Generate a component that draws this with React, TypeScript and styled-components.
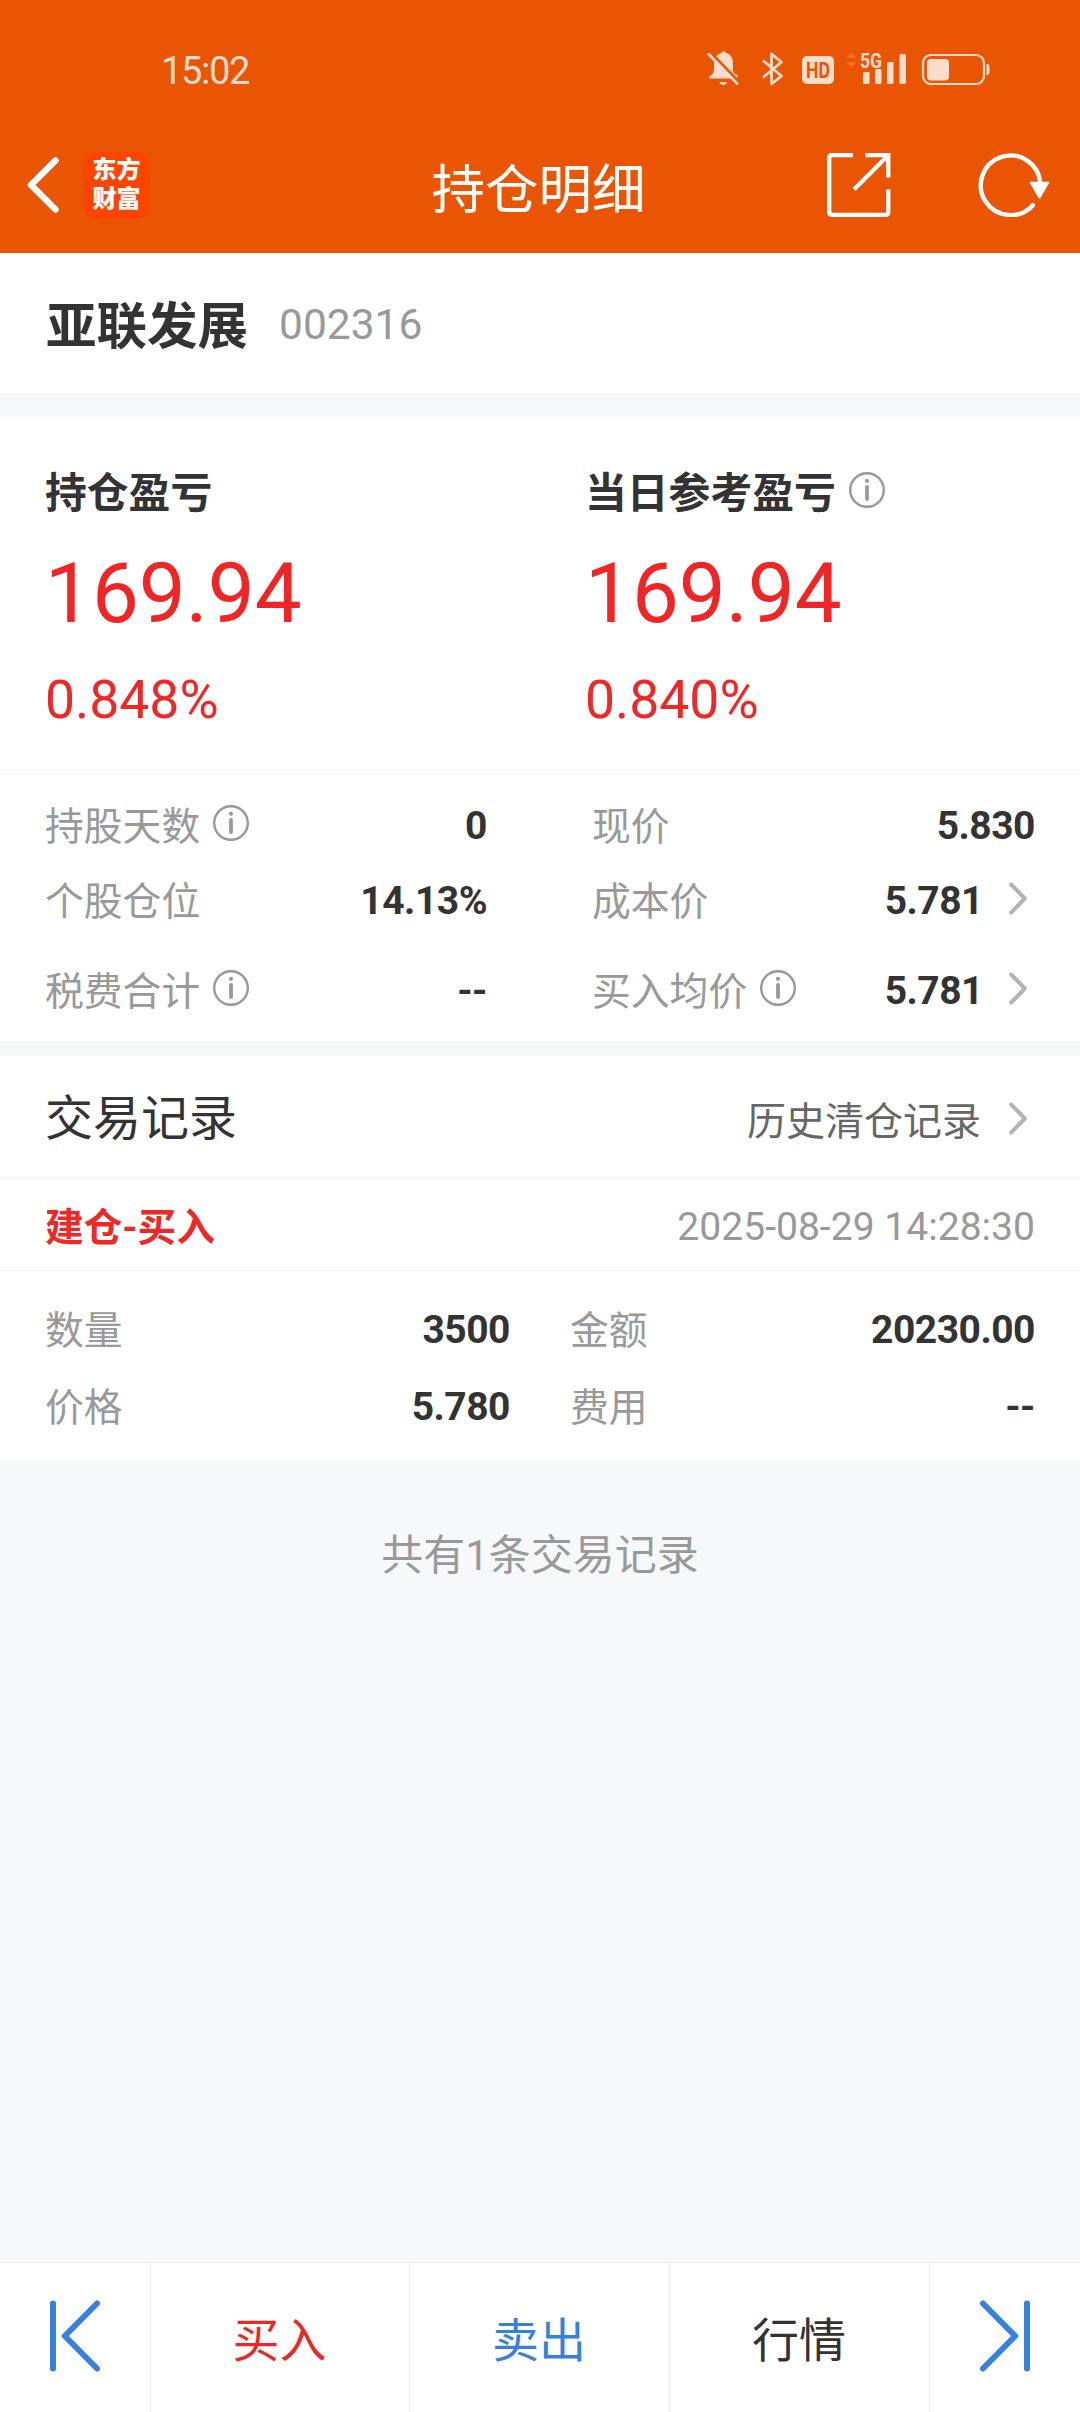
import React from 'react';
import styled, { createGlobalStyle } from 'styled-components';

const GlobalStyle = createGlobalStyle`
  * { box-sizing: border-box; }
  body {
    margin: 0;
    background: #f6f8fa;
    font-family: Roboto, 'Noto Sans CJK SC', sans-serif;
    color: #333;
  }
  svg { display: block; flex: none; }
`;

const Screen = styled.div`
  width: 1080px;
  height: 2412px;
  display: flex;
  flex-direction: column;
  background: #f6f8fa;
  overflow: hidden;
  white-space: nowrap;
`;

const Header = styled.header`
  height: 253px;
  flex: none;
  background: #ea5504;
  color: #fff;
`;

const StatusBar = styled.div`
  height: 118px;
  padding: 20px 90px 0 161px;
  display: flex;
  align-items: center;
  justify-content: space-between;
  color: #fcdccb;
`;

const Clock = styled.span`
  font-size: 38px;
  line-height: 44px;
  letter-spacing: -1.3px;
  padding-top: 4px;
`;

const TitleBar = styled.div`
  height: 135px;
  padding: 0 29px 1px 26px;
  display: grid;
  grid-template-columns: 1fr auto 1fr;
  align-items: center;
`;

const BarSide = styled.div<{ $end?: boolean }>`
  display: flex;
  align-items: center;
  gap: ${(p) => (p.$end ? '87px' : '23px')};
  justify-content: ${(p) => (p.$end ? 'flex-end' : 'flex-start')};
`;

const PageTitle = styled.h1`
  margin: 0;
  padding: 11px 0 0;
  font-size: 53.5px;
  font-weight: 400;
  line-height: 64px;
`;

const AppLogo = styled.div`
  width: 67px;
  height: 67px;
  border-radius: 13px;
  background: #ff4400;
  display: flex;
  flex-direction: column;
  align-items: center;
  justify-content: center;
  font-size: 24px;
  font-weight: 900;
  line-height: 29px;
`;

const StockBar = styled.section`
  height: 140px;
  margin-bottom: 24px;
  flex: none;
  background: #fff;
  padding-left: 46px;
  display: flex;
  align-items: center;
  gap: 31px;
`;

const StockName = styled.h2`
  margin: 0;
  padding-top: 8px;
  font-size: 50.5px;
  font-weight: 700;
  line-height: 60px;
`;

const StockCode = styled.span`
  padding-top: 3px;
  font-size: 42.5px;
  line-height: 50px;
  color: #999;
`;

const ProfitPanel = styled.section`
  height: 354px;
  flex: none;
  background: #fff;
  border-bottom: 1px solid #f4f5f6;
  padding: 47px 45px 0;
  display: grid;
  grid-template-columns: 540px 1fr;
`;

const ProfitTitle = styled.h3`
  margin: 0 0 20px;
  height: 60px;
  display: flex;
  align-items: center;
  gap: 13px;
  font-size: 41.8px;
  font-weight: 700;
  line-height: 60px;
`;

const ProfitValue = styled.div`
  font-size: 83.5px;
  line-height: 100px;
  color: #f02525;
`;

const ProfitRate = styled.div`
  margin-top: 26px;
  font-size: 53.5px;
  line-height: 60px;
  color: #ee2727;
`;

const StatsPanel = styled.section`
  height: 270px;
  margin-bottom: 15px;
  flex: none;
  background: #fff;
  padding: 17px 45px 0;
  display: grid;
  grid-template-columns: 442px 443px;
  grid-template-rows: 75px 90px 75px;
  column-gap: 105px;
`;

const Field = styled.div<{ $height: number }>`
  height: ${(p) => p.$height}px;
  display: flex;
  align-items: center;
  justify-content: space-between;
`;

const FieldLabel = styled.span`
  display: flex;
  align-items: center;
  gap: 13px;
  font-size: 38.8px;
  line-height: 46px;
  color: #999;
`;

const LabelText = styled.span`
  padding-top: 3px;
`;

const FieldValue = styled.span`
  display: flex;
  align-items: center;
  gap: 26px;
  font-size: 39px;
  font-weight: 700;
  line-height: 46px;
  letter-spacing: -0.5px;
`;

const Info = styled.svg<{ $lift: number }>`
  width: 36px;
  height: 36px;
  margin-bottom: ${(p) => p.$lift}px;
`;

const Chevron = styled.svg<{ $top?: number; $bottom?: number }>`
  width: 18px;
  height: 33px;
  margin: ${(p) => p.$top ?? 0}px 8px ${(p) => p.$bottom ?? 0}px 0;
`;

const RecordsHead = styled.section`
  height: 124px;
  flex: none;
  background: #fff;
  border-bottom: 4px solid #f6f8fa;
  padding: 0 45px;
  display: flex;
  align-items: center;
  justify-content: space-between;
`;

const RecordsTitle = styled.h3`
  margin: 0;
  padding-top: 6px;
  font-size: 48px;
  font-weight: 400;
  line-height: 56px;
`;

const HistoryLink = styled.a`
  display: flex;
  align-items: center;
  gap: 28px;
  font-size: 39px;
  line-height: 46px;
  color: #666;
`;

const HistoryText = styled.span`
  padding-top: 11px;
`;

const RecordHead = styled.div`
  height: 91px;
  flex: none;
  background: #fff;
  border-bottom: 1px solid #f4f5f6;
  padding: 0 45px;
  display: flex;
  align-items: center;
  justify-content: space-between;
`;

const RecordKind = styled.span`
  padding-top: 5px;
  font-size: 38.7px;
  font-weight: 700;
  line-height: 46px;
  color: #ee2727;
`;

const RecordTime = styled.time`
  padding-top: 3px;
  font-size: 39.1px;
  line-height: 46px;
  color: #999;
`;

const RecordBody = styled.section`
  height: 190px;
  flex: none;
  background: #fff;
  padding: 20px 45px 0;
  display: grid;
  grid-template-columns: 465px 465px;
  grid-auto-rows: 77px;
  column-gap: 60px;
`;

const Summary = styled.p`
  flex: 1;
  margin: 65px 0 0;
  text-align: center;
  font-size: 42px;
  line-height: 60px;
  color: #999;
`;

const BottomNav = styled.nav`
  height: 150px;
  flex: none;
  background: #fff;
  border-top: 1px solid #e9eaeb;
  display: grid;
  grid-template-columns: 150px 259px 260px 260px 151px;
`;

const NavCell = styled.button<{ $color?: string; $icon?: boolean }>`
  border: 0;
  background: none;
  margin: 0;
  padding: ${(p) => (p.$icon ? '0 0 4px' : '6px 1px 0 0')};
  display: flex;
  align-items: center;
  justify-content: center;
  font: 400 47px/56px Roboto, 'Noto Sans CJK SC', sans-serif;
  color: ${(p) => p.$color ?? '#333'};
  & + & { border-left: 1px solid #e9eaeb; }
`;

const InfoIcon = ({ lift = 5 }: { lift?: number }) => (
  <Info viewBox="0 0 36 36" fill="none" $lift={lift}>
    <circle cx="18" cy="18" r="16.8" stroke="#999" strokeWidth="2.4" />
    <circle cx="18" cy="8.8" r="2.1" fill="#999" />
    <path d="M18 15V27" stroke="#999" strokeWidth="3.8" strokeLinecap="round" />
  </Info>
);

const ChevronIcon = ({ top, bottom }: { top?: number; bottom?: number }) => (
  <Chevron viewBox="0 0 18 33" $top={top} $bottom={bottom} fill="none">
    <path d="M2.2 2.5L15.8 16.5L2.2 30.5" stroke="#b3b3b3" strokeWidth="4" strokeLinecap="round" strokeLinejoin="round" />
  </Chevron>
);

const StatusIcons = () => (
  <svg width="283" height="52" viewBox="0 -8 283 52" fill="#fcdccb">
    {/* muted bell */}
    <path d="M3 32V28.500C3 27 4 26.500 5.500 25.500C7.500 24 8 22 8 19V14C8 8 11.500 4.500 15.500 3.500C15.500 1.500 20 1.500 20 3.500C25 4.500 27 9 27 14V20C27 23 28 24.500 31.500 25.500V29H3Z" transform="translate(-1 -1.500)" />
    <path d="M12.500 31H20C19.500 35 13 35 12.500 31Z" />
    <path d="M2 0L34 33" stroke="#ea5504" strokeWidth="3" />
    <path d="M1 2.500L31 33.500" stroke="#fcdccb" strokeWidth="2.600" />
    {/* bluetooth */}
    <path d="M56 9.500L74.500 25L64.500 33V3L74.500 11L56 26.500" fill="none" stroke="#fcdccb" strokeWidth="2.800" strokeLinejoin="round" />
    {/* HD badge */}
    <rect x="95" y="5" width="32" height="28" rx="5" />
    <text x="111" y="27" textAnchor="middle" textLength="24" lengthAdjust="spacingAndGlyphs" fontFamily="Roboto" fontWeight="700" fontSize="22.500" fill="#ea5504">HD</text>
    {/* data arrows */}
    <path d="M139 7L144 2L149.500 7ZM139 11L144 16L149.500 11Z" fill="#f0702c" />
    {/* signal */}
    <rect x="156" y="21" width="6.500" height="12" rx="1.300" />
    <rect x="168" y="18" width="6.500" height="15" rx="1.300" />
    <rect x="180" y="11" width="6.500" height="22" rx="1.300" />
    <rect x="192.500" y="3" width="6.500" height="30" rx="1.300" />
    <text x="164" y="16.500" textAnchor="middle" textLength="22" lengthAdjust="spacingAndGlyphs" fontFamily="Roboto" fontWeight="700" fontSize="21">5G</text>
    {/* battery */}
    <rect x="216" y="4" width="61" height="29" rx="8" fill="none" stroke="#fcdccb" strokeWidth="2.200" />
    <rect x="220" y="8" width="22" height="21.500" rx="4" />
    <path d="M279.500 13C282.500 13 282.500 15 282.500 18.500C282.500 22 282.500 24 279.500 24Z" />
  </svg>
);

const BackIcon = () => (
  <svg width="34" height="58" viewBox="0 0 34 58" fill="none">
    <path d="M29.500 4.500L5 29L29.500 53.500" stroke="#fff" strokeWidth="6.500" strokeLinecap="round" strokeLinejoin="round" />
  </svg>
);

const ShareIcon = () => (
  <svg width="64" height="64" viewBox="0 0 64 64" fill="none" stroke="#fff" strokeWidth="4.300">
    <path d="M26 2.200H5Q2.200 2.200 2.200 5V59Q2.200 61.800 5 61.800H58.500Q61.300 61.800 61.300 59V36.500" />
    <path d="M38.500 2.200H61.300V24.500M61 2.500L27 36.500" />
  </svg>
);

const RefreshIcon = () => (
  <svg width="73" height="64" viewBox="0 0 73 64" fill="none">
    <path d="M54.800 52.200A29.800 29.800 0 1 1 62.300 30" stroke="#fff" strokeWidth="4.400" strokeLinecap="round" />
    <path d="M52.500 29.500H70.500L61.500 45Z" fill="#fff" stroke="#fff" strokeWidth="1.500" strokeLinejoin="round" />
  </svg>
);

const JumpIcon = ({ flip }: { flip?: boolean }) => (
  <svg width="50" height="72" viewBox="0 0 50 72" fill="none" stroke="#3781dd" strokeWidth="6" strokeLinecap="round" strokeLinejoin="round">
    <g transform={flip ? 'translate(50 0) scale(-1 1)' : undefined}>
      <path d="M3 3.500V68.500M47 3.500L14.800 36L47 68.500" />
    </g>
  </svg>
);

type FieldData = { label: string; value: string; info?: boolean; link?: boolean };

const stats: FieldData[] = [
  { label: '持股天数', value: '0', info: true },
  { label: '现价', value: '5.830' },
  { label: '个股仓位', value: '14.13%' },
  { label: '成本价', value: '5.781', link: true },
  { label: '税费合计', value: '--', info: true },
  { label: '买入均价', value: '5.781', info: true, link: true },
];

const record: FieldData[] = [
  { label: '数量', value: '3500' },
  { label: '金额', value: '20230.00' },
  { label: '价格', value: '5.780' },
  { label: '费用', value: '--' },
];

const FieldRow = ({ data, height }: { data: FieldData; height: number }) => (
  <Field $height={height}>
    <FieldLabel>
      <LabelText>{data.label}</LabelText>
      {data.info && <InfoIcon />}
    </FieldLabel>
    <FieldValue>
      {data.value}
      {data.link && <ChevronIcon bottom={5} />}
    </FieldValue>
  </Field>
);

export default function App() {
  return (
    <Screen>
      <GlobalStyle />
      <Header>
        <StatusBar>
          <Clock>15:02</Clock>
          <StatusIcons />
        </StatusBar>
        <TitleBar>
          <BarSide>
            <BackIcon />
            <AppLogo>
              <span>东方</span>
              <span>财富</span>
            </AppLogo>
          </BarSide>
          <PageTitle>持仓明细</PageTitle>
          <BarSide $end>
            <ShareIcon />
            <RefreshIcon />
          </BarSide>
        </TitleBar>
      </Header>

      <StockBar>
        <StockName>亚联发展</StockName>
        <StockCode>002316</StockCode>
      </StockBar>

      <ProfitPanel>
        <div>
          <ProfitTitle>持仓盈亏</ProfitTitle>
          <ProfitValue>169.94</ProfitValue>
          <ProfitRate>0.848%</ProfitRate>
        </div>
        <div>
          <ProfitTitle>
            当日参考盈亏
            <InfoIcon lift={8} />
          </ProfitTitle>
          <ProfitValue>169.94</ProfitValue>
          <ProfitRate>0.840%</ProfitRate>
        </div>
      </ProfitPanel>

      <StatsPanel>
        {stats.map((s) => (
          <FieldRow key={s.label} data={s} height={75} />
        ))}
      </StatsPanel>

      <RecordsHead>
        <RecordsTitle>交易记录</RecordsTitle>
        <HistoryLink>
          <HistoryText>历史清仓记录</HistoryText>
          <ChevronIcon top={4} />
        </HistoryLink>
      </RecordsHead>
      <RecordHead>
        <RecordKind>建仓-买入</RecordKind>
        <RecordTime>2025-08-29 14:28:30</RecordTime>
      </RecordHead>
      <RecordBody>
        {record.map((r) => (
          <FieldRow key={r.label} data={r} height={77} />
        ))}
      </RecordBody>

      <Summary>共有1条交易记录</Summary>

      <BottomNav>
        <NavCell $icon>
          <JumpIcon />
        </NavCell>
        <NavCell $color="#e62a2a">买入</NavCell>
        <NavCell $color="#3781dd">卖出</NavCell>
        <NavCell>行情</NavCell>
        <NavCell $icon>
          <JumpIcon flip />
        </NavCell>
      </BottomNav>
    </Screen>
  );
}
